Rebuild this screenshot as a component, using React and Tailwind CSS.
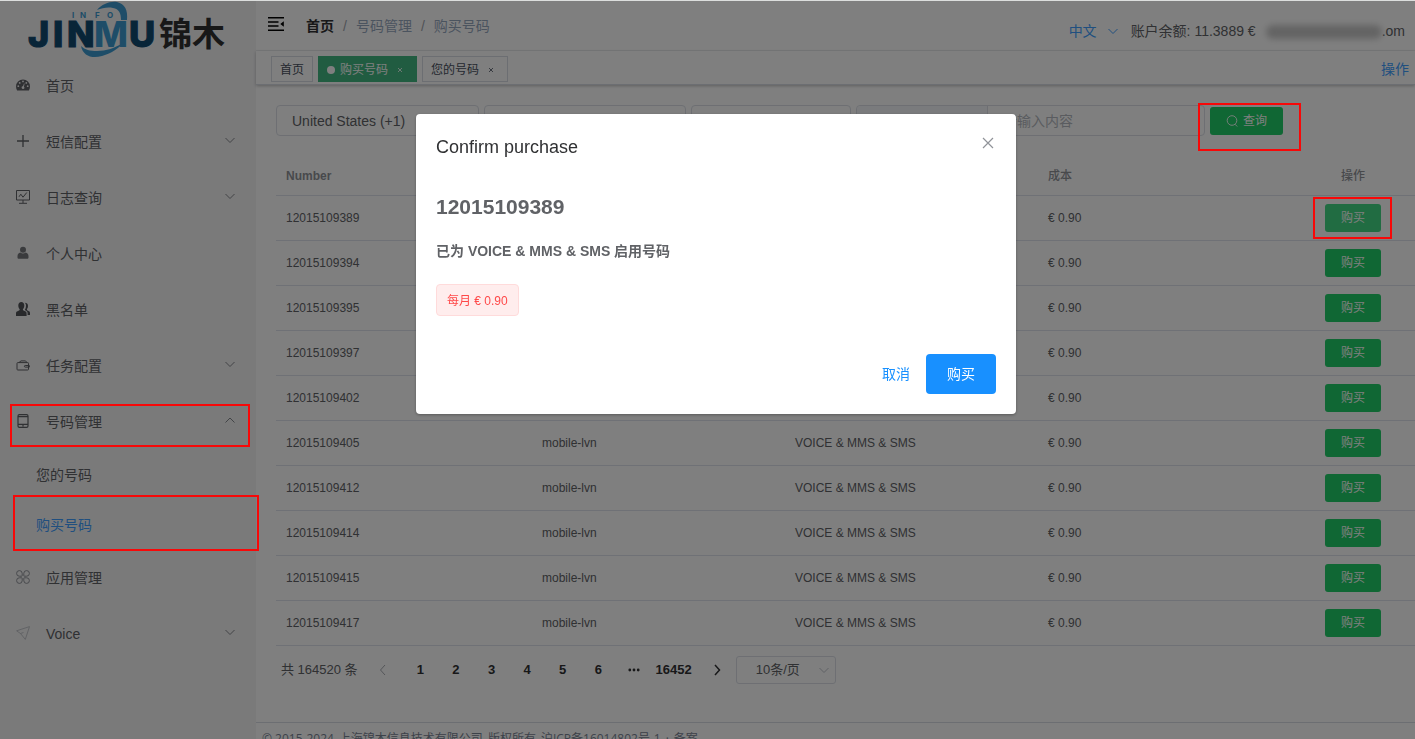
const NUMBERS = [
  "12015109389", "12015109394", "12015109395", "12015109397", "12015109402",
  "12015109405", "12015109412", "12015109414", "12015109415", "12015109417",
];

const ARROWS = {
  down: "M1.500 4 6 8.500 10.500 4",
  up: "M1.500 8.500 6 4l4.500 4.500",
  left: "M8 1 3.500 6 8 11",
  right: "M4 1l4.500 5L4 11",
};

function Arrow({ to, className = "" }) {
  return (
    <svg viewBox="0 0 12 12" className={"h-3 w-3 " + className} fill="none" stroke="currentColor" strokeWidth="1">
      <path d={ARROWS[to]} />
    </svg>
  );
}
function Cross({ className }) {
  return (
    <svg viewBox="0 0 12 12" className={className} fill="none" stroke="currentColor" strokeWidth="1.200">
      <path d="m1 1 10 10M11 1 1 11" />
    </svg>
  );
}
function SmallCross() {
  return (
    <svg viewBox="0 0 6 6" className="h-1.5 w-1.5" fill="none" stroke="currentColor" strokeWidth=".8">
      <path d="m1 1 4 4M5 1 1 5" />
    </svg>
  );
}
function DashboardIcon() {
  return (
    <svg viewBox="0 0 14 12" className="h-3 w-3.5">
      <path fill="#606266" fillRule="evenodd" d="M7 .4a7 7 0 0 0-7 7c0 1.500.4 2.800 1.100 4h11.800c.7-1.200 1.100-2.500 1.100-4a7 7 0 0 0-7-7ZM7 1.500a.9.9 0 1 1 0 1.800.9.900 0 0 1 0-1.800ZM3.700 3a.9.9 0 1 1 0 1.800.9.900 0 0 1 0-1.800ZM2.300 6.300a.9.9 0 1 1 0 1.800.9.900 0 0 1 0-1.800ZM11.700 6.300a.9.9 0 1 1 0 1.800.9.900 0 0 1 0-1.800ZM10.300 3a.9.9 0 1 1 0 1.800.9.900 0 0 1 0-1.800ZM8 4.400l.6.200-.7 3.200c.5.4.7.9.5 1.500a1.500 1.500 0 0 1-2.800-.7c0-.8.6-1.300 1.400-1.300L8 4.400Z" />
    </svg>
  );
}
function PlusIcon() {
  return (
    <svg viewBox="0 0 14 14" className="h-3.5 w-3.5" fill="none" stroke="#606266" strokeWidth="1.3">
      <path d="M7 1v12M1 7h12" />
    </svg>
  );
}
function MonitorIcon() {
  return (
    <svg viewBox="0 0 14 14" className="h-3.5 w-3.5" fill="none" stroke="#606266" strokeWidth="1">
      <path d="M.5.5h13v9.500H.5zM7 10v3M3 13.300h8M3 6.800l1.800-2.600 2.200 3 3.800-4.700" />
    </svg>
  );
}
function UserIcon() {
  return (
    <svg viewBox="0 0 14 14" className="h-3.5 w-3.5" fill="#75777b">
      <circle cx="7" cy="3.800" r="3" />
      <path d="M4.400 6.500C2.500 7 1.500 8.400 1.500 10.200v1.200c0 .9.500 1.400 1.400 1.400h8.200c.9 0 1.400-.5 1.400-1.400v-1.200c0-1.800-1-3.200-2.900-3.700a4 4 0 0 1-5.200 0Z" />
    </svg>
  );
}
function PeopleIcon() {
  return (
    <svg viewBox="0 0 14 14" className="h-3.5 w-3.5" fill="#505256">
      <path d="M5.300 0C3.500 0 2.300 1.300 2.300 3.400c0 1.500.5 2.800 1.300 3.600.2.900 0 1.300-.6 1.600L1 9.600C.2 10 0 10.700 0 11.700V14h10.600v-2.300c0-1-.2-1.700-1-2.100l-2-1C7 8.300 6.800 7.900 7 7c.8-.8 1.300-2.100 1.300-3.600C8.300 1.300 7.100 0 5.300 0Z" />
      <path d="M8.700.8c2 0 3.300 1 3.300 3.200 0 1.300-.4 2.300-1 3-.2.800 0 1.300.5 1.500l1.500.8c.8.400 1 1.200 1 2V13h-2.400v-1.600c0-1.300-.5-2.200-1.500-2.700l-1.300-.7c.8-1.200 1.200-2.700 1.200-4.300C10 2.500 9.500 1.500 8.700.8Z" />
    </svg>
  );
}
function WalletIcon() {
  return (
    <svg viewBox="0 0 14 14" className="h-3.5 w-3.5" fill="none" stroke="#606266" strokeWidth="1">
      <rect x="1" y="4.600" width="11.500" height="7.400" rx=".8" />
      <path d="M3 4.500 5 2.900h4.200l2 1.600M13.300 7.500H9.200a.8.8 0 0 0 0 1.600h4.100z" />
    </svg>
  );
}
function PhoneIcon() {
  return (
    <svg viewBox="0 0 14 14" className="h-3.5 w-3.5" fill="none" stroke="#606266" strokeWidth="1.200">
      <rect x="2" y=".6" width="10" height="12.800" rx="1.400" />
      <path d="M2 2.700h10M2 10.300h10M6.200 11.900h1.600" />
    </svg>
  );
}
function CloverIcon() {
  return (
    <svg viewBox="0 0 14 14" className="h-3.5 w-3.5" fill="none" stroke="#909399" strokeWidth="1">
      <path d="M6.200 5.700V3.300A2.800 2.800 0 1 0 3.400 6.200h2.300a.5.5 0 0 0 .5-.5zM7.800 5.700V3.300a2.800 2.800 0 1 1 2.800 2.900H8.300a.5.5 0 0 1-.5-.5zM6.200 8.300v2.400a2.800 2.800 0 1 1-2.800-2.900h2.300a.5.5 0 0 1 .5.5zM7.800 8.300v2.400a2.800 2.800 0 1 0 2.800-2.900H8.300a.5.5 0 0 0-.5.5z" />
    </svg>
  );
}
function PlaneIcon() {
  return (
    <svg viewBox="0 0 14 14" className="h-3.5 w-3.5" fill="none" stroke="#b8babf" strokeWidth=".8" strokeLinejoin="round">
      <path d="M13.500.6.600 4.800l3.900 2.700L9.300 13.400zM4.500 7.500l3-1" />
    </svg>
  );
}
function SearchIcon() {
  return (
    <svg viewBox="0 0 12 12" className="h-3 w-3" fill="none" stroke="currentColor" strokeWidth=".9">
      <circle cx="6" cy="5.500" r="4.800" />
      <path d="m9 9.200 2.200 2.300" />
    </svg>
  );
}
function FoldIcon() {
  return (
    <svg viewBox="0 0 16 14" className="h-3.5 w-4" fill="none" stroke="#000" strokeWidth="1.500">
      <path d="M0 .8h16M0 4.900h10.500M0 9h10.500M0 13.200h16" />
      <path d="M15.800 4.300v5.400L12.300 7z" fill="#000" stroke="none" />
    </svg>
  );
}

function Logo() {
  return (
    <svg viewBox="0 0 256 57" className="h-[57px] w-64" role="img" aria-label="JINMU INFO">
      <g fill="#3d9bd0">
        <path d="M97 9C102 3 110 0 117 1c8 2 11 8 10 18h-6c0-7-2-11-8-12-5-1-11 0-16 2Z" />
        <path d="M81 45c2 10 11 13 21 10 10-3 17-8 21-13-8 5-17 8-26 8-7 0-12-1-16-5Z" />
      </g>
      <g fontFamily="Inter, sans-serif" fontWeight="800" fontSize="36">
        <g fill="#104a70" stroke="#104a70" strokeWidth="1">
          <text x="28" y="46">J</text>
          <text x="53" y="46">I</text>
          <text x="67" y="46">N</text>
          <text x="129" y="46">U</text>
        </g>
        <text x="94" y="46" fill="#3d9bd0">M</text>
      </g>
      <g fontFamily="Inter, sans-serif" fontWeight="700" fontSize="8" fill="#3d9bd0">
        <text x="72" y="17">I</text>
        <text x="80" y="17">N</text>
        <text x="95" y="17">F</text>
        <text x="107" y="17">O</text>
      </g>
      <text x="159" y="45" fontFamily="'Noto Sans CJK SC', sans-serif" fontWeight="700" fontSize="33" fill="#303030">锦木</text>
    </svg>
  );
}

function Callout({ className }) {
  return <span aria-hidden="true" className={"pointer-events-none absolute z-50 border-2 border-[#f80808] " + className} />;
}

const MENU = [
  { label: "首页", icon: DashboardIcon },
  { label: "短信配置", icon: PlusIcon, arrow: true },
  { label: "日志查询", icon: MonitorIcon, arrow: true },
  { label: "个人中心", icon: UserIcon },
  { label: "黑名单", icon: PeopleIcon },
  { label: "任务配置", icon: WalletIcon, arrow: true },
  { label: "号码管理", icon: PhoneIcon, open: true },
  { label: "应用管理", icon: CloverIcon },
  { label: "Voice", icon: PlaneIcon, arrow: true },
];

function MenuItem({ item }) {
  const Icon = item.icon;
  return (
    <li className="relative">
      <button type="button" aria-expanded={item.arrow || item.open ? !!item.open : undefined} className="flex h-14 w-full items-center pr-5 pl-4 text-left text-sm text-[#606266]">
        <span className="w-[30px] pb-0.5"><Icon /></span>
        <span className="flex-1">{item.label}</span>
        {item.arrow && <Arrow to="down" className="mb-1 text-[#85888e]" />}
        {item.open && <Arrow to="up" className="mb-1 text-[#85888e]" />}
      </button>
      {item.open && (
        <>
          <Callout className="top-2.5 right-1.5 left-2.5 h-[43px]" />
          <ul>
            <li><a href="#mine" className="flex h-[50px] items-center pl-9 text-sm text-[#606266]">您的号码</a></li>
            <li className="relative">
              <a href="#buy" className="flex h-[50px] items-center pl-9 text-sm text-[#409eff]">购买号码</a>
              <Callout className="-top-[5px] -right-[3px] left-[13px] h-14" />
            </li>
          </ul>
        </>
      )}
    </li>
  );
}

function Sidebar() {
  return (
    <aside className="w-64 shrink-0 bg-[#f4f4f5]">
      <Logo />
      <ul>{MENU.map((m) => <MenuItem key={m.label} item={m} />)}</ul>
    </aside>
  );
}

function Header() {
  return (
    <header className="flex h-[50px] shrink-0 items-center border-b border-[#f0f1f3] pr-2.5 pl-3 text-sm">
      <button type="button" aria-label="收起菜单" className="mb-1"><FoldIcon /></button>
      <nav aria-label="面包屑" className="ml-[22px] flex items-center gap-[9px] text-[#97a8be]">
        <a href="#home" className="font-bold text-[#303133]">首页</a>
        <span className="text-[#a0a4ac]">/</span>
        <span>号码管理</span>
        <span className="text-[#a0a4ac]">/</span>
        <span>购买号码</span>
      </nav>
      <div className="ml-auto flex items-center pt-2.5">
        <button type="button" className="flex items-center gap-2.5 text-[#409eff]">
          中文 <Arrow to="down" />
        </button>
        <span className="ml-3 text-[#606266]">账户余额: 11.3889 €</span>
        <span className="ml-2.5 text-[#606266]">
          <span className="inline-block h-3.5 w-[116px] rounded-full bg-[#c8c8c8] align-middle blur-[3px]" />
          .om
        </span>
      </div>
    </header>
  );
}

function TagBar() {
  return (
    <div className="flex h-[34px] shrink-0 items-center border-b border-[#d8dce5] pt-0.5 pr-1.5 pl-[15px] text-xs text-[#495060] shadow-[0_1px_3px_0_rgba(0,0,0,0.25)]">
      <div className="flex gap-[5px]">
        <a href="#home" className="flex h-[26px] items-center border border-[#d8dce5] px-2 pt-0.5">首页</a>
        <span className="flex h-[26px] items-center border border-[#42b983] bg-[#42b983] px-2 pt-0.5 text-white">
          <i className="mr-[5px] h-2 w-2 rounded-full bg-white" />
          购买号码
          <button type="button" aria-label="关闭" className="ml-1 flex h-4 w-4 items-center justify-center"><SmallCross /></button>
        </span>
        <span className="flex h-[26px] items-center border border-[#d8dce5] px-2 pt-0.5">
          您的号码
          <button type="button" aria-label="关闭" className="ml-1 flex h-4 w-4 items-center justify-center"><SmallCross /></button>
        </span>
      </div>
      <a href="#actions" className="ml-auto text-sm text-[#409eff]">操作</a>
    </div>
  );
}

function Filters() {
  return (
    <form className="flex items-center gap-[5px]" onSubmit={(e) => e.preventDefault()}>
      <select aria-label="国家" className="h-[31px] w-[203px] appearance-none rounded border border-[#dcdfe6] bg-white px-[15px] text-sm text-[#606266]">
        <option>United States (+1)</option>
      </select>
      <select aria-label="类型" className="h-[31px] w-[202px] appearance-none rounded border border-[#dcdfe6] bg-white" />
      <select aria-label="功能" className="h-[31px] w-40 appearance-none rounded border border-[#dcdfe6] bg-white" />
      <div className="flex h-[31px] w-[349px] rounded border border-[#dcdfe6]">
        <select aria-label="匹配方式" className="w-[131px] appearance-none rounded-l border-r border-[#dcdfe6] bg-[#f5f7fa]" />
        <input aria-label="号码" placeholder="请输入内容" className="min-w-0 flex-1 bg-transparent px-[15px] text-sm placeholder:text-[#b4b8c0]" />
      </div>
      <div className="relative">
        <button type="submit" className="flex h-7 w-[73px] items-center justify-center gap-[5px] rounded-[3px] bg-[#20cf68] text-xs text-white">
          <SearchIcon /> 查询
        </button>
        <Callout className="-top-1 -left-3 h-12 w-[103px]" />
      </div>
    </form>
  );
}

function NumbersTable() {
  return (
    <table className="mt-5 w-full table-fixed border-collapse text-left text-xs text-[#606266]">
      <colgroup>
        <col className="w-64" /><col /><col /><col /><col className="w-[124px]" />
      </colgroup>
      <thead>
        <tr className="h-[39px] border-b border-[#dfe3ec] text-[#909399]">
          <th className="px-2.5 pt-0.5">Number</th>
          <th className="px-2.5 pt-0.5">Type</th>
          <th className="px-2.5 pt-0.5">Features</th>
          <th className="px-2.5 pt-0.5 font-medium">成本</th>
          <th className="px-2.5 pt-0.5 text-center font-medium">操作</th>
        </tr>
      </thead>
      <tbody>
        {NUMBERS.map((n, i) => (
          <tr key={n} className="h-[45px] border-b border-[#dfe3ec]">
            <td className="px-2.5">{n}</td>
            <td className="px-2.5">mobile-lvn</td>
            <td className="px-2.5">VOICE &amp; MMS &amp; SMS</td>
            <td className="px-2.5">€ 0.90</td>
            <td>
              <div className="relative mx-auto w-14">
                <button type="button" className={"block h-7 w-14 rounded-[3px] text-xs text-white " + (i === 0 ? "bg-[#42d885]" : "bg-[#20cf68]")}>购买</button>
                {i === 0 && <Callout className="-top-[7px] -left-3 h-[42px] w-[79px]" />}
              </div>
            </td>
          </tr>
        ))}
      </tbody>
    </table>
  );
}

function Pagination() {
  return (
    <nav aria-label="分页" className="mt-2.5 flex h-7 items-center pl-[5px] text-[13px] text-[#606266]">
      <span>共 164520 条</span>
      <button type="button" aria-label="上一页" className="ml-4 flex w-[18px] justify-center text-[#a8abb2]"><Arrow to="left" /></button>
      <div className="ml-[11px] flex w-[249px] items-center font-bold text-[#303133]">
        {["1", "2", "3", "4", "5", "6"].map((p) => (
          <button type="button" key={p} className="flex-1 text-center">{p}</button>
        ))}
        <button type="button" aria-label="向后 5 页" className="flex flex-1 justify-center">
          <svg viewBox="0 0 12 4" className="h-1 w-3" fill="currentColor">
            <circle cx="1.800" cy="2" r="1.400" /><circle cx="6" cy="2" r="1.400" /><circle cx="10.200" cy="2" r="1.400" />
          </svg>
        </button>
      </div>
      <button type="button" className="ml-1 font-bold text-[#303133]">16452</button>
      <button type="button" aria-label="下一页" className="ml-4 flex w-[18px] justify-center text-[#303133]"><Arrow to="right" className="stroke-[1.500]" /></button>
      <div className="relative ml-2.5 h-7 w-[100px]">
        <select aria-label="每页条数" className="h-full w-full appearance-none rounded-[3px] border border-[#dcdfe6] bg-white pr-4 text-center text-[13px]">
          <option>10条/页</option>
        </select>
        <Arrow to="down" className="pointer-events-none absolute top-2 right-1.5 text-[#c0c4cc]" />
      </div>
    </nav>
  );
}

function PurchaseDialog() {
  return (
    <div className="fixed inset-x-0 top-px bottom-0 z-40 flex items-start justify-center bg-black/50 pt-[113px] pl-[17px]">
      <section role="dialog" aria-modal="true" aria-labelledby="dialog-title" className="flex h-[300px] w-[600px] flex-col rounded-sm bg-white px-5 pb-5 text-[#606266] shadow-[0_1px_3px_rgba(0,0,0,0.3)]">
        <div className="flex h-[61px] items-start justify-between pt-[21px]">
          <h2 id="dialog-title" className="text-lg leading-6 text-[#303133]">Confirm purchase</h2>
          <button type="button" aria-label="关闭" className="flex h-4 w-4 items-center justify-center text-[#909399]"><Cross className="h-3 w-3" /></button>
        </div>
        <h3 className="mt-5 text-[21px] leading-6 font-bold">12015109389</h3>
        <p className="mt-[22px] text-sm leading-5 font-bold">已为 VOICE &amp; MMS &amp; SMS 启用号码</p>
        <span className="mt-[23px] flex h-8 items-center self-start rounded border border-[#ffdbdb] bg-[#ffeded] px-2.5 pt-px text-xs text-[#ff4949]">每月 € 0.90</span>
        <div className="mt-auto flex items-center justify-end gap-4 text-sm">
          <button type="button" className="text-[#1890ff]">取消</button>
          <button type="button" className="h-10 w-[70px] rounded bg-[#1890ff] text-white">购买</button>
        </div>
      </section>
    </div>
  );
}

export default function App() {
  return (
    <div className="flex h-screen overflow-hidden border-t border-[#dcdedd] bg-white font-['Liberation_Sans','Noto_Sans_CJK_SC',sans-serif]">
      <Sidebar />
      <div className="flex min-w-0 flex-1 flex-col">
        <Header />
        <TagBar />
        <main className="shrink-0 pt-5 pb-[38px] pl-5">
          <Filters />
          <NumbersTable />
          <Pagination />
        </main>
        <footer className="flex shrink-0 gap-[5px] border-t border-[#d8dce5] px-1.5 pt-2 font-['Open_Sans','Noto_Sans_CJK_SC',sans-serif] text-xs leading-4 whitespace-nowrap text-[#7a8494]">
          <span>© 2015-2024</span>
          <span>上海锦木信息技术有限公司</span>
          <span>版权所有</span>
          <span>沪ICP备16014802号-1</span>
          <span>·</span>
          <span>备案</span>
        </footer>
      </div>
      <PurchaseDialog />
    </div>
  );
}
